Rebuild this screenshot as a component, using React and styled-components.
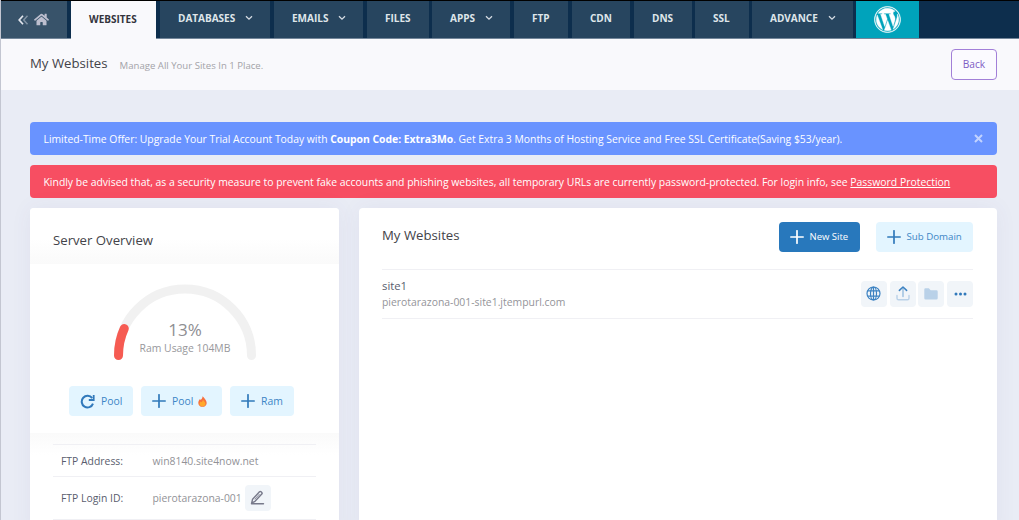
import React from "react";
import styled, { createGlobalStyle } from "styled-components";
import { FaWordpress, FaHome } from "react-icons/fa";

const GlobalStyle = createGlobalStyle`
  * { box-sizing: border-box; }
  html, body { margin: 0; height: 520px; overflow: hidden; }
  body { background: #e9ecf5; font-family: "Open Sans", "Noto Sans", sans-serif; font-size: 11px; color: #48465b; }
  button { font-family: inherit; cursor: pointer; }
  svg { display: block; flex: none; }
`;

const Page = styled.div`
  height: 520px;
  overflow: hidden;
  border-left: 1px solid #c3c6d1;
  background: #e9ecf5;
`;
const Nav = styled.nav`
  display: flex;
  height: 39px;
  margin-left: -1px;
  border-top: 1px solid #000;
  background: #0d2e4d;
  border-bottom: 1px solid #73869a;
`;
const Tab = styled.a`
  display: flex;
  align-items: center;
  flex: none;
  width: ${(p) => p.$w}px;
  margin-right: ${(p) => p.$gap ?? 4}px;
  padding: 0 0 3px 18px;
  height: ${(p) => (p.$active ? 38 : 37)}px;
  background: ${(p) => (p.$active ? "#f9f9fc" : "#27455f")};
  color: ${(p) => (p.$active ? "#34343c" : "#dfe5ea")};
  font-size: 10px;
  font-weight: 700;
  white-space: nowrap;
  svg { margin-left: auto; margin-right: 17px; }
`;
const HomeTab = styled(Tab)`
  padding: 0 0 0 18px;
  background: #38536a;
  color: #bdbfcf;
  gap: 5px;
  svg { margin: 0; }
`;
const WordPressTab = styled(Tab)`
  background: #00a3bb;
  color: #fff;
  justify-content: center;
  padding: 0;
  svg { margin: 0; stroke: #fff; stroke-width: 8px; }
`;
const SubHeader = styled.header`
  display: flex;
  align-items: center;
  height: 51px;
  padding: 0 22px 0 29px;
  background: #f9f9fc;
`;
const Title = styled.h1`
  margin: 0 0 ${(p) => p.$lift ?? 0}px;
  font-size: 13.2px;
  font-weight: 400;
  line-height: 18px;
  color: #434349;
`;
const Hint = styled.span`
  margin: 1px 0 0 12px;
  font-size: 9.6px;
  color: #a3a3a8;
`;
const BackButton = styled.button`
  width: 46px;
  height: 31px;
  margin-left: auto;
  padding: 0 0 2px;
  border: 1px solid #a27fd8;
  border-radius: 4px;
  background: #fbfaff;
  color: #7e5cc4;
  font-size: 10.2px;
`;
const Content = styled.main`
  padding: 32px 22px 0 29px;
`;
const Alert = styled.div`
  display: flex;
  align-items: center;
  height: 33px;
  margin-bottom: 10px;
  padding: 0 14px 0 13.5px;
  border-radius: 4px;
  background: ${(p) => (p.$danger ? "#f74e62" : "#6993ff")};
  color: #fff;
  font-size: ${(p) => (p.$danger ? 10.41 : 10.37)}px;
  white-space: pre;
  a { color: inherit; text-decoration: underline; }
  b { font-weight: 700; }
  svg { margin-left: auto; }
`;
const Columns = styled.div`
  display: grid;
  grid-template-columns: 308.5px 638px;
  column-gap: 20px;
`;
const Card = styled.section`
  height: 330px;
  border-radius: 4px 4px 0 0;
  background: #fff;
  box-shadow: 0 0 22px rgba(82, 63, 135, 0.06);
`;
const OverviewHead = styled.div`
  display: flex;
  align-items: center;
  height: 56px;
  padding: 8px 23px 0;
  background: linear-gradient(#fff 55%, #fafafa);
  border-radius: 4px 4px 0 0;
`;
const OverviewBody = styled.div`
  height: 169px;
  padding-top: 16px;
  background: #fff;
`;
const Gauge = styled.div`
  display: flex;
  justify-content: center;
  height: 84px;
  padding-left: 1.5px;
  svg { overflow: visible; }
`;
const ButtonRow = styled.div`
  display: flex;
  gap: 8px;
  padding: 22px 0 0 39px;
`;
const ActionButton = styled.button`
  display: flex;
  align-items: center;
  width: ${(p) => p.$w}px;
  height: 30px;
  padding: 0 0 0 11px;
  border: 0;
  border-radius: 4px;
  background: ${(p) => (p.$primary ? "#2878bc" : "#e3f5ff")};
  color: ${(p) => (p.$primary ? "#fff" : "#3d85c6")};
  font-size: ${(p) => p.$size ?? 10.4}px;
  white-space: nowrap;
  span { margin: 0 0 1px 6px; }
  span + svg { margin-left: 5px; }
`;
const Details = styled.div`
  padding: 11px 23px 0;
  background: linear-gradient(#fafafa, #fff 22px);
`;
const DetailRow = styled.div`
  display: flex;
  align-items: center;
  height: ${(p) => p.$h}px;
  padding-left: 8px;
  border-top: 1px solid #f0f0f4;
  font-size: 10.4px;
`;
const DetailLabel = styled.span`
  width: 91.5px;
  color: #595d6e;
`;
const DetailValue = styled.span`
  color: #929297;
`;
const IconButton = styled.button`
  display: grid;
  place-items: center;
  width: 26px;
  height: 26px;
  padding: 0 0 1px;
  border: 0;
  border-radius: 4px;
  background: #f1f5f9;
`;
const EditButton = styled(IconButton)`
  margin-left: 3px;
`;
const SiteHead = styled.div`
  display: flex;
  align-items: center;
  height: 61px;
  padding: 0 24px 4px 23.5px;
`;
const SiteActions = styled.div`
  display: flex;
  gap: 16px;
  margin-left: auto;
`;
const SiteRow = styled.div`
  display: flex;
  align-items: center;
  justify-content: space-between;
  height: 50px;
  margin: 0 23.5px;
  border-top: 1px solid #f0f0f4;
  border-bottom: 1px solid #f0f0f4;
`;
const SiteName = styled.div`
  font-size: 11.3px;
  line-height: 16px;
  color: #595d6e;
`;
const SiteUrl = styled.div`
  font-size: 10.4px;
  line-height: 16px;
  color: #949499;
`;
const IconGroup = styled.div`
  display: flex;
  gap: 2.7px;
`;

const Chevron = () => (
  <svg width="8" height="6" viewBox="0 0 8 6" fill="none" stroke="#d5dce3" strokeWidth="1.3">
    <path d="M1 1.2l3 3 3-3" />
  </svg>
);
const Plus = ({ color = "#3179bb" }) => (
  <svg width="14" height="14" viewBox="0 0 14 14" stroke={color} strokeWidth="1.7" strokeLinecap="round">
    <path d="M7 .8v12.4M.8 7h12.4" />
  </svg>
);
const Reload = () => (
  <svg width="15" height="15" viewBox="0 0 15 15" fill="none" stroke="#3179bb" strokeWidth="2">
    <path d="M12.2 4.2A5.8 5.8 0 1 0 13 9.6" />
    <path d="M13.7 1v5H8.8" strokeWidth="1.8" />
  </svg>
);
const Flame = () => (
  <svg width="9" height="11" viewBox="0 0 9 12" preserveAspectRatio="none">
    <path d="M4.6.2C6 2 8.700 4.400 8.700 7.500c0 2.600-1.800 4.300-4.200 4.300S.3 10.100.3 7.500C.3 5.800 1.100 4.600 2 3.400l.7 1C3.600 3.200 4.500 2 4.600.2z" fill="#f7703d" />
    <path d="M4.900 4.200c.4 1.300 2.600 2.300 2.600 4.400 0 1.700-1.300 2.700-3 2.700s-3-1-3-2.700c0-1.200.7-1.900 1.100-2.600l.9.900c.8-.6 1.300-1.500 1.400-2.700z" fill="#ffa92b" />
  </svg>
);
const Pencil = () => (
  <svg width="15" height="15" viewBox="0 0 15 15" fill="none" stroke="#77798a" strokeWidth="1.4" strokeLinejoin="round" strokeLinecap="round">
    <path d="M13.500 13.700H1.500l1.100-4.500 6.900-7.400q.8-.7 1.600 0l.7.700q.7.800 0 1.600L5 11.300l-3 1.500" />
    <path d="M9.300 4.300L5 9" strokeWidth=".8" />
  </svg>
);
const Globe = () => (
  <svg width="15" height="15" viewBox="0 0 15 15" fill="none" stroke="#3c82c2" strokeWidth="1.200">
    <circle cx="7.500" cy="7.500" r="6.500" />
    <ellipse cx="7.500" cy="7.500" rx="3" ry="6.500" />
    <path d="M7.500 1v13M1.700 4.900h11.600M1.700 10.100h11.600" />
  </svg>
);
const Upload = () => (
  <svg width="14" height="15" viewBox="0 0 14 15" fill="none" strokeLinecap="round" strokeLinejoin="round">
    <path d="M1 9.500v2.700q0 1.600 1.600 1.600h8.800q1.600 0 1.600-1.600V9.500" stroke="#b9d1e8" strokeWidth="1.400" />
    <path d="M7 2v8.500" stroke="#91b8dc" strokeWidth="1.300" />
    <path d="M3.400 4.400L7 1l3.600 3.400" stroke="#3c82c2" strokeWidth="1.500" />
  </svg>
);
const Folder = () => (
  <svg width="14" height="12" viewBox="0 0 14 12" fill="#b9d1e8">
    <path d="M1.500.3h3.300l1.900 1.900h5.700q1.300 0 1.300 1.200v6.800q0 1.300-1.300 1.300H1.600Q.3 11.500.3 10.200V1.500Q.3.300 1.500.3z" />
  </svg>
);
const Dots = () => (
  <svg width="13" height="4" viewBox="0 0 13 4" fill="#3179bb">
    <circle cx="2" cy="2" r="1.500" /><circle cx="6.500" cy="2" r="1.500" /><circle cx="11" cy="2" r="1.500" />
  </svg>
);
const Close = () => (
  <svg width="9" height="9" viewBox="0 0 9 9" stroke="#c2d3ff" strokeWidth="2">
    <path d="M1 1l7 7M8 1L1 8" />
  </svg>
);
const Back = () => (
  <svg width="11" height="10" viewBox="0 0 11 10" fill="none" strokeWidth="1.400">
    <path d="M5 .8L1.200 5 5 9.200" stroke="#e3e6ee" strokeWidth="1.700" />
    <path d="M9.500 .8L5.700 5l3.800 4.200" stroke="#8394a5" />
  </svg>
);

const tabs = [
  { label: "WEBSITES", w: 85, gap: 4, active: true },
  { label: "DATABASES", w: 110, gap: 4, menu: true },
  { label: "EMAILS", w: 89, gap: 4, menu: true },
  { label: "FILES", w: 62, gap: 3 },
  { label: "APPS", w: 78, gap: 4, menu: true },
  { label: "FTP", w: 54, gap: 4 },
  { label: "CDN", w: 58, gap: 4 },
  { label: "DNS", w: 58, gap: 3 },
  { label: "SSL", w: 54, gap: 3 },
  { label: "ADVANCE", w: 101, gap: 3, menu: true },
];

export default function App() {
  return (
    <>
      <GlobalStyle />
      <Page>
        <Nav>
          <HomeTab $w={67}><Back /><FaHome size={15} /></HomeTab>
          {tabs.map((t) => (
            <Tab key={t.label} $w={t.w} $gap={t.gap} $active={t.active}>
              {t.label}
              {t.menu && <Chevron />}
            </Tab>
          ))}
          <WordPressTab $w={63}><FaWordpress size={27} /></WordPressTab>
        </Nav>
        <SubHeader>
          <Title $lift={3}>My Websites</Title>
          <Hint>Manage All Your Sites In 1 Place.</Hint>
          <BackButton>Back</BackButton>
        </SubHeader>
        <Content>
          <Alert>
            <span>Limited-Time Offer: Upgrade Your Trial Account Today with <b>Coupon Code: Extra3Mo</b>. Get Extra 3 Months of Hosting Service and Free SSL Certificate(Saving $53/year).</span>
            <Close />
          </Alert>
          <Alert $danger>
            <span>Kindly be advised that, as a security measure to prevent fake accounts and phishing websites, all temporary URLs are currently password-protected. For login info, see <a>Password Protection</a></span>
          </Alert>
          <Columns>
            <Card>
              <OverviewHead><Title>Server Overview</Title></OverviewHead>
              <OverviewBody>
                <Gauge>
                  <svg width="150" height="84" viewBox="0 0 150 84" fill="none" strokeWidth="9" strokeLinecap="round">
                    <path d="M8.500 75.500A66.500 66.500 0 0 1 141.500 75.500" stroke="#f1f1f1" />
                    <path d="M8.500 75.500Q8.500 61 14.300 48.500" stroke="#f65b52" />
                    <text x="75" y="56" textAnchor="middle" fontSize="17" fill="#8e8e92">13%</text>
                    <text x="75" y="72" textAnchor="middle" fontSize="10.400" fill="#98989c">Ram Usage 104MB</text>
                  </svg>
                </Gauge>
                <ButtonRow>
                  <ActionButton $w={64}><Reload /><span>Pool</span></ActionButton>
                  <ActionButton $w={81}><Plus /><span>Pool</span><Flame /></ActionButton>
                  <ActionButton $w={64}><Plus /><span>Ram</span></ActionButton>
                </ButtonRow>
              </OverviewBody>
              <Details>
                <DetailRow $h={32}>
                  <DetailLabel>FTP Address:</DetailLabel>
                  <DetailValue>win8140.site4now.net</DetailValue>
                </DetailRow>
                <DetailRow $h={43}>
                  <DetailLabel>FTP Login ID:</DetailLabel>
                  <DetailValue>pierotarazona-001</DetailValue>
                  <EditButton aria-label="Edit"><Pencil /></EditButton>
                </DetailRow>
                <DetailRow $h={32} />
              </Details>
            </Card>
            <Card>
              <SiteHead>
                <Title $lift={4}>My Websites</Title>
                <SiteActions>
                  <ActionButton $w={81} $primary $size={9.5}><Plus color="#fff" /><span>New Site</span></ActionButton>
                  <ActionButton $w={97} $size={9.7}><Plus /><span>Sub Domain</span></ActionButton>
                </SiteActions>
              </SiteHead>
              <SiteRow>
                <div>
                  <SiteName>site1</SiteName>
                  <SiteUrl>pierotarazona-001-site1.jtempurl.com</SiteUrl>
                </div>
                <IconGroup>
                  <IconButton aria-label="Open"><Globe /></IconButton>
                  <IconButton aria-label="Publish"><Upload /></IconButton>
                  <IconButton aria-label="Files"><Folder /></IconButton>
                  <IconButton aria-label="More"><Dots /></IconButton>
                </IconGroup>
              </SiteRow>
            </Card>
          </Columns>
        </Content>
      </Page>
    </>
  );
}
